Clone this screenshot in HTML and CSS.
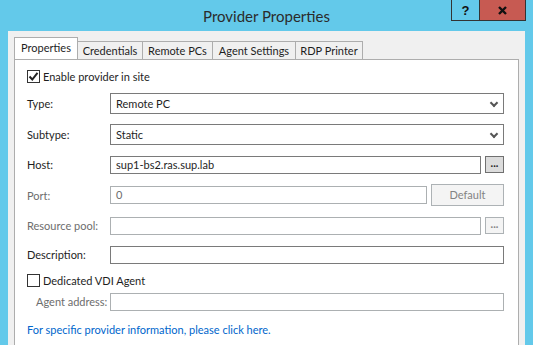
FILE: index.html
```html
<!DOCTYPE html>
<html>
<head>
    <title>Provider Properties</title>
    <meta charset="UTF-8">
    <link rel="stylesheet" href="styles.css">
</head>
<body>
    <div class="window">
        <div class="titlebar">
            <div></div>
            <div class="title">Provider Properties</div>
            <div class="caption-buttons">
                <div class="cap-btn help">?</div>
                <div class="cap-btn close">
                    <svg width="9" height="9" viewBox="0 0 9 9"><path d="M1 1 L8 8 M8 1 L1 8" stroke="#111" stroke-width="2.4" fill="none"/></svg>
                </div>
            </div>
        </div>

        <div class="dialog">
            <div class="tabs">
                <div class="tab active">Properties</div>
                <div class="tab">Credentials</div>
                <div class="tab">Remote PCs</div>
                <div class="tab">Agent Settings</div>
                <div class="tab">RDP Printer</div>
            </div>

            <div class="panel">
                <div class="row check-row">
                    <span class="checkbox checked">
                        <svg width="11" height="11" viewBox="0 0 11 11"><path d="M1.5 5.5 L4.3 8.5 L9.5 1.8" stroke="#222" stroke-width="2" fill="none"/></svg>
                    </span>
                    <span>Enable provider in site</span>
                </div>

                <div class="row field-row tall">
                    <label>Type:</label>
                    <div class="box select">Remote PC<span class="chevron"></span></div>
                </div>

                <div class="row field-row tall">
                    <label>Subtype:</label>
                    <div class="box select">Static<span class="chevron"></span></div>
                </div>

                <div class="row field-row">
                    <label>Host:</label>
                    <div class="box">sup1-bs2.ras.sup.lab</div>
                    <div class="dots">...</div>
                </div>

                <div class="row field-row port-row disabled">
                    <label>Port:</label>
                    <div class="box">0</div>
                    <div class="btn-default">Default</div>
                </div>

                <div class="row field-row disabled">
                    <label>Resource pool:</label>
                    <div class="box"></div>
                    <div class="dots">...</div>
                </div>

                <div class="row field-row">
                    <label>Description:</label>
                    <div class="box"></div>
                </div>

                <div class="row check-row">
                    <span class="checkbox"></span>
                    <span>Dedicated VDI Agent</span>
                </div>

                <div class="row field-row agent-row disabled">
                    <label>Agent address:</label>
                    <div class="box"></div>
                </div>

                <div class="row link-row">
                    <a href="#">For specific provider information, please click here.</a>
                </div>
            </div>
        </div>
    </div>
</body>
</html>
```

FILE: styles.css
```css
body {
    margin: 0;
    font-family: Lato, 'Liberation Sans', sans-serif;
    font-size: 11px;
    color: #1e1e1e;
}
.window {
    width: 533px;
    height: 345px;
    background-color: #63c9ea;
    padding: 0 8px;
    box-sizing: border-box;
    overflow: hidden;
}
.titlebar {
    display: grid;
    grid-template-columns: 1fr auto 1fr;
    height: 31px;
    margin: 0 -8px;
}
.title {
    font-size: 15px;
    color: #2b2b2b;
    line-height: 31px;
    padding-top: 1px;
}
.caption-buttons {
    display: flex;
    justify-content: flex-end;
    align-items: flex-start;
    padding-right: 7px;
}
.cap-btn {
    height: 20px;
    border: 1px solid #333;
    box-sizing: content-box;
    display: flex;
    align-items: center;
    justify-content: center;
    border-top: none;
}
.help {
    width: 27px;
    border-right: none;
    font-weight: bold;
    font-size: 13px;
    font-family: 'Liberation Sans', sans-serif;
    color: #111;
}
.close {
    width: 45px;
    background-color: #c75a52;
}
.dialog {
    background-color: #f0f0f0;
    height: 314px;
    padding: 7px 6px 0 6px;
}
.tabs {
    display: flex;
    align-items: flex-end;
    height: 21px;
    position: relative;
    z-index: 1;
}
.tab {
    height: 17px;
    border: 1px solid #adadad;
    border-bottom: none;
    background-color: #f0f0f0;
    line-height: 18px;
    margin-left: -1px;
    text-align: center;
    white-space: nowrap;
}
.tab.active {
    height: 21px;
    background-color: #fff;
    margin-left: 0;
    line-height: 19px;
}
.tab:nth-child(1) { width: 62px; }
.tab:nth-child(2) { width: 64px; }
.tab:nth-child(3) { width: 69px; }
.tab:nth-child(4) { width: 82px; }
.tab:nth-child(5) { width: 66px; }
.panel {
    background-color: #fff;
    border: 1px solid #adadad;
    border-bottom: none;
    height: 300px;
    padding: 10px 14px 0 12px;
    display: flex;
    flex-direction: column;
    gap: 10px;
}
.row {
    display: flex;
    align-items: center;
}
.check-row {
    height: 13px;
}
.checkbox {
    width: 11px;
    height: 11px;
    border: 1px solid #333;
    margin-right: 3px;
    display: flex;
    align-items: center;
    justify-content: center;
}
.field-row {
    height: 19px;
}
.field-row.tall {
    height: 21px;
}
.field-row label {
    width: 83px;
    flex: none;
    white-space: nowrap;
}
.box {
    flex: 1;
    height: 16px;
    border: 1px solid #7a7a7a;
    padding: 0 5px;
    line-height: 16px;
    position: relative;
}
.field-row.tall .box {
    height: 19px;
    line-height: 19px;
}
.chevron {
    position: absolute;
    right: 6px;
    top: 6px;
    width: 4px;
    height: 4px;
    border-right: 2px solid #555;
    border-bottom: 2px solid #555;
    transform: rotate(45deg);
}
.dots {
    width: 17px;
    height: 15px;
    margin-left: 4px;
    border: 1px solid #707070;
    background-color: #dcdcdc;
    font-weight: bold;
    text-align: center;
    line-height: 12px;
}
.port-row {
    height: 22px;
}
.btn-default {
    width: 71px;
    height: 20px;
    margin-left: 4px;
    border: 1px solid #adb2b5;
    background-color: #f4f4f4;
    color: #838383;
    text-align: center;
    line-height: 20px;
}
.disabled label {
    color: #6d6d6d;
}
.disabled .box {
    border-color: #acb0b2;
    color: #6d6d6d;
}
.disabled .dots {
    border-color: #adb2b5;
    background-color: #f4f4f4;
    color: #838383;
}
.agent-row {
    margin-top: -5px;
}
.agent-row label {
    padding-left: 9px;
    width: 74px;
}
.link-row {
    margin-top: 2px;
}
.link-row a {
    color: #0066cc;
    text-decoration: none;
}
```
